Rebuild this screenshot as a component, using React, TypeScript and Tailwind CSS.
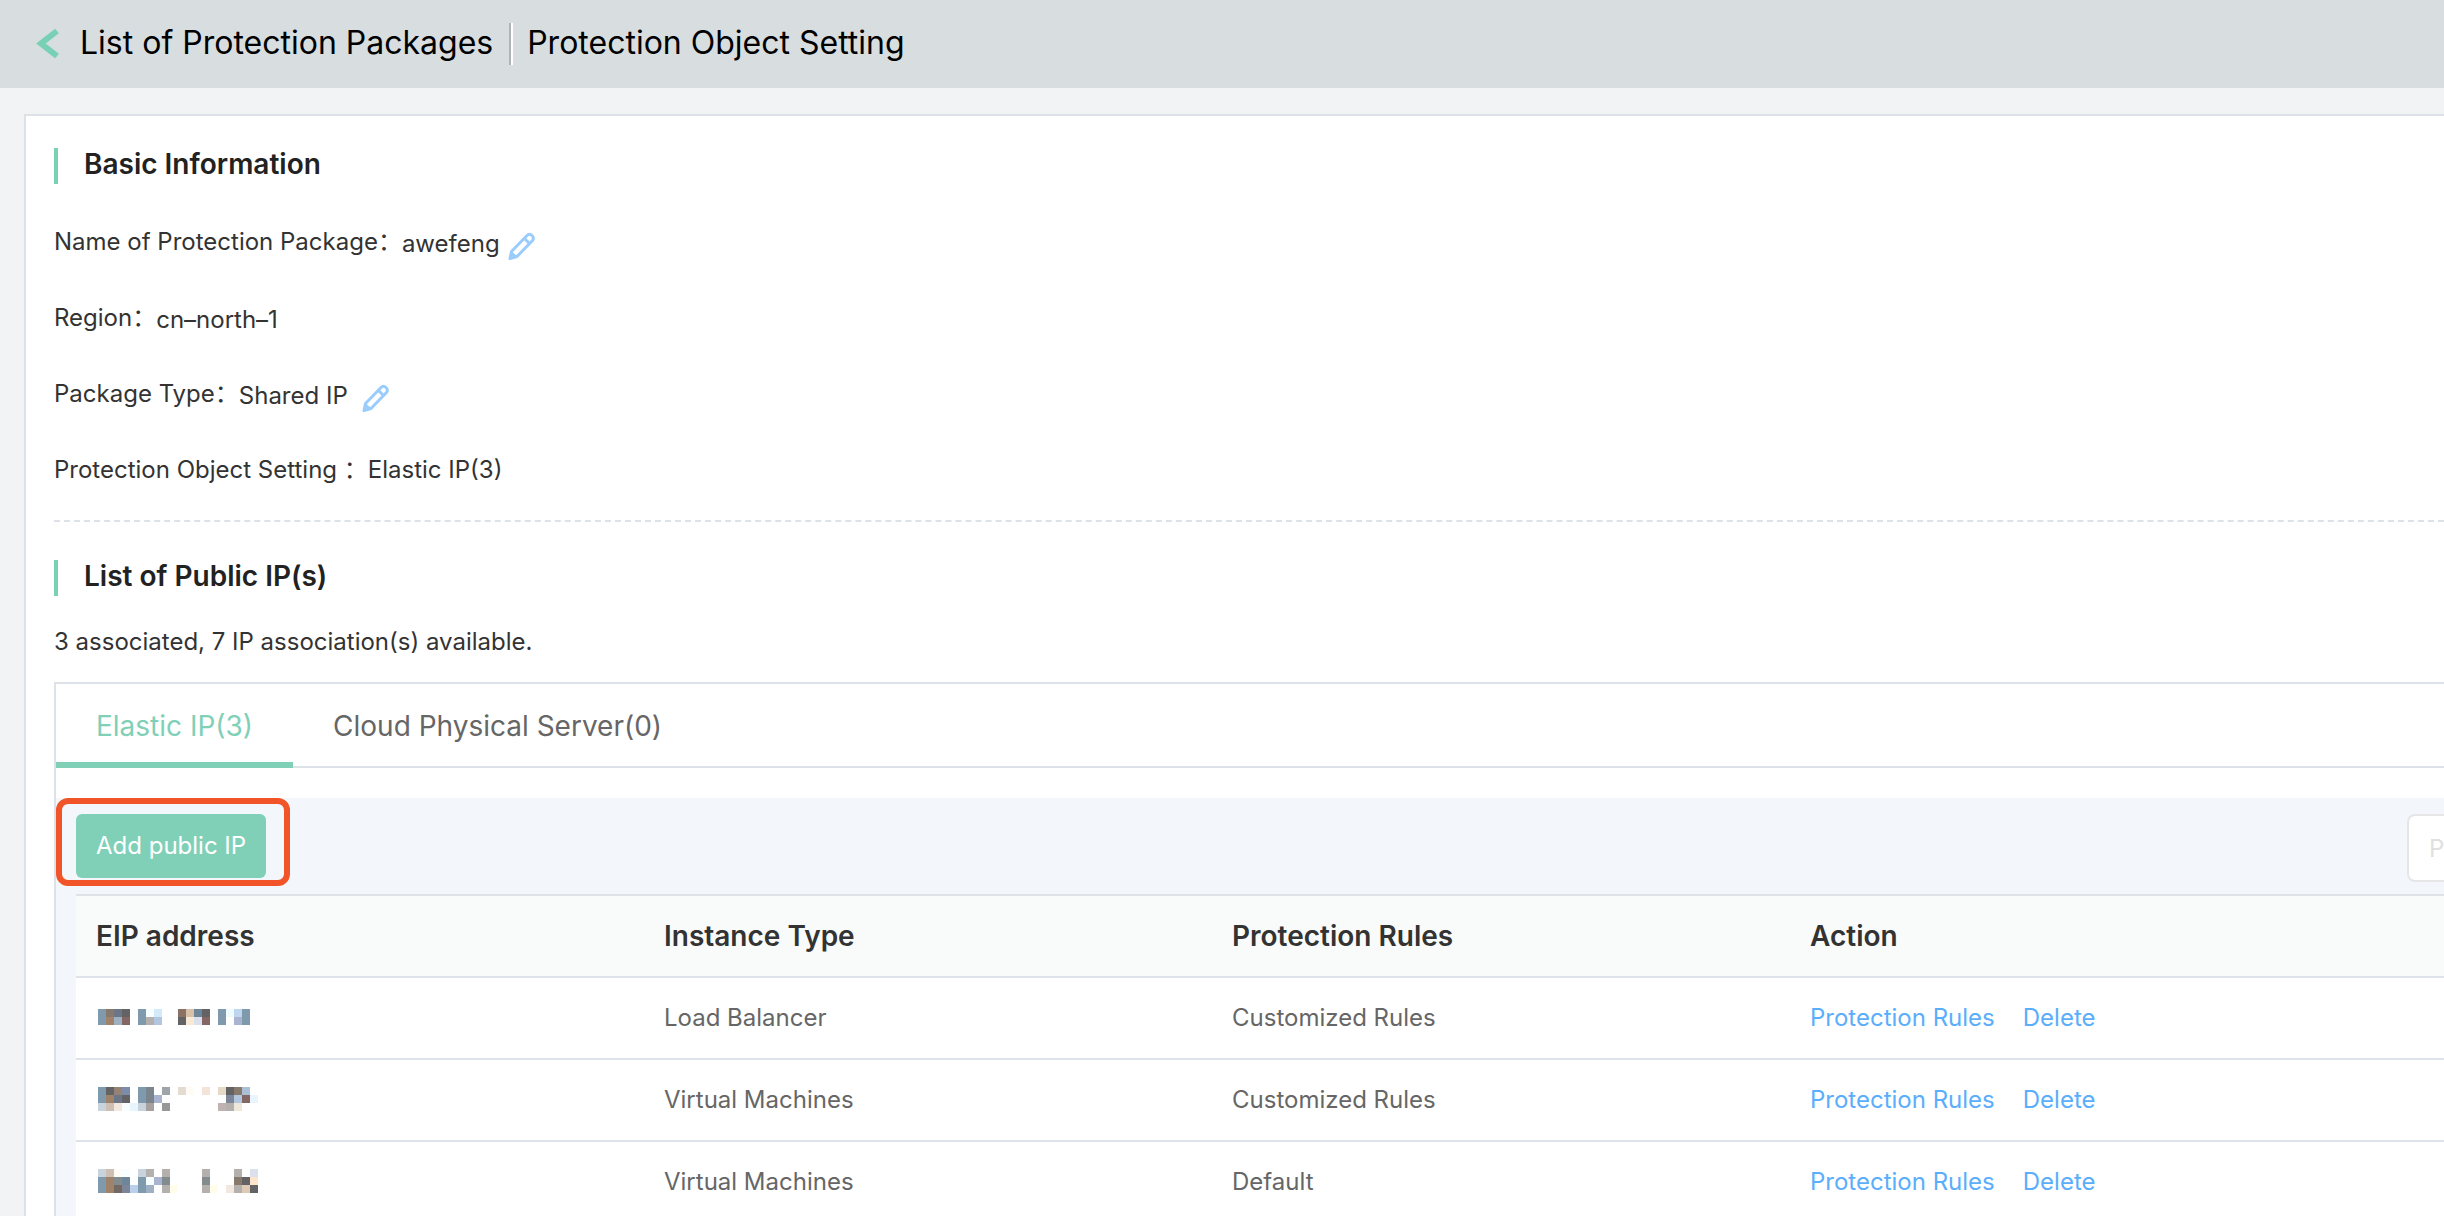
import React from "react";

const P: Record<string, string> = {
  a: "#7f9aad", b: "#877a6c", c: "#6c7686", d: "#636366", e: "#f6feff", f: "#d5eaf9",
  g: "#8b7265", h: "#d8c0a9", i: "#6e8699", j: "#f0fbff", k: "#bfd7ee", l: "#a0826a",
  m: "#9fb0c2", n: "#846765", o: "#b3b0ae", p: "#b3c6e0", q: "#f8ead5", r: "#dae1ec",
  s: "#aab4d0", t: "#968275", u: "#7d8ca8", v: "#7a858d", w: "#9ea5a9", x: "#e4dcd1",
  y: "#fffcf6", z: "#f2e4d8", A: "#e6d9c8", B: "#a9c0d6", C: "#7d8599", D: "#e8f5ff",
  E: "#c9d3dc", F: "#cdbfb4", G: "#f3e8e0", H: "#a6a19e", I: "#989898", J: "#c0b2b0",
  K: "#efe7da", L: "#828b8e", M: "#fffcea", N: "#fde5cb", O: "#b9cfec", Q: "#736862",
  R: "#dfcab6",
};

const MASKED = [
  ["abcd.aef..ghid.ajka", "almn.aop..dqrn.a.sa"],
  ["adtu.av.w.xy.z.AdbB", "alcd.avs........CpnD", "EFGeDEH.I......JoK"],
  ["EFye.Eo.o....o...o.r", "alLi.aesL....L...bdN", "alQCOam.oM...oM.GoRd"],
];

function MaskedAddress({ rows }: { rows: string[] }) {
  return (
    <svg role="img" aria-label="Masked address" width="160" height={rows.length * 8} className="ml-0.5 block" shapeRendering="crispEdges">
      {rows.flatMap((row, y) =>
        [...row].map((c, x) => (c === "." ? null : <rect key={x + "-" + y} x={x * 8} y={y * 8} width="8" height="8" fill={P[c]} />)),
      )}
    </svg>
  );
}

function EditButton({ label }: { label: string }) {
  return (
    <button type="button" aria-label={label} className="mt-1.5 block">
      <svg width="28" height="28" viewBox="0 0 28 28" fill="none" stroke="#9accfd" strokeWidth="3" strokeLinejoin="round">
        <path d="M2 26.500 3.500 19.500 19 3.500Q21.500 1 24 3.500 26.500 6 24.500 8.500L9 24.500Z" />
        <path d="m16.500 6.500 5 5M3 21l5 4" />
      </svg>
    </button>
  );
}

function Info({ label, value, edit, gap = "" }: { label: string; value: string; edit?: string; gap?: string }) {
  return (
    <div className="flex h-[76px] items-start leading-9">
      <dt>{label}：</dt>
      <dd className={`flex items-start ${gap}`}>
        {value}
        {edit && <EditButton label={edit} />}
      </dd>
    </div>
  );
}

function SectionTitle({ children }: { children: React.ReactNode }) {
  return (
    <h2 className="h-9 border-l-4 border-[#78d0b5] pl-[26px] text-[28px] leading-8 font-semibold text-[#222]">{children}</h2>
  );
}

const ROWS = [
  { type: "Load Balancer", rules: "Customized Rules" },
  { type: "Virtual Machines", rules: "Customized Rules" },
  { type: "Virtual Machines", rules: "Default" },
];

export default function App() {
  return (
    <div className="h-screen overflow-hidden bg-[#f2f3f5] font-['Inter','Noto_Sans_CJK_SC',sans-serif] text-2xl text-[#333]">
      <header className="flex h-22 items-center bg-[#d8dde0] pl-9 text-[32px] leading-10 text-black">
        <a href="#packages" className="flex items-center gap-5 pb-0.5">
          <svg width="24" height="30" viewBox="0 0 24 30" fill="none" stroke="#78d0b5" strokeWidth="6">
            <path d="M21 3 5 15.500l16 12.500" />
          </svg>
          List of Protection Packages
        </a>
        <span className="mr-3.5 ml-4 h-[42px] w-1 border-r-2 border-l-2 border-r-white border-l-[#b0b4b7]" />
        <h1 className="pb-0.5">Protection Object Setting</h1>
      </header>

      <main className="mt-[26px] ml-6 border-t-2 border-l-2 border-[#dce2e7] bg-white pt-8 pl-7">
        <SectionTitle>Basic Information</SectionTitle>
        <dl className="mt-10">
          <Info label="Name of Protection Package" value="awefeng" edit="Edit package name" gap="gap-2 pt-0.5" />
          <Info label="Region" value="cn–north–1" gap="pt-0.5" />
          <Info label="Package Type" value="Shared IP" edit="Edit package type" gap="gap-3.5 pt-0.5" />
          <Info label="Protection Object Setting " value="Elastic IP(3)" />
        </dl>
        <hr className="-mt-2 border-t-2 border-dashed border-[#dce2e7]" />
        <div className="mt-[38px]">
          <SectionTitle>List of Public IP(s)</SectionTitle>
        </div>
        <p className="mt-7 leading-9">3 associated, 7 IP association(s) available.</p>

        <section className="mt-[22px] border-t-2 border-l-2 border-[#dce2e7]">
          <div role="tablist" className="flex h-21 border-b-2 border-[#dce2e7] text-[28px]">
            <button type="button" role="tab" aria-selected="true" className="-mb-0.5 border-b-6 border-[#7fd0b7] px-10 pt-2 text-[#7fd0b7]">
              Elastic IP(3)
            </button>
            <button type="button" role="tab" aria-selected="false" className="px-10 pt-1 text-[#666]">
              Cloud Physical Server(0)
            </button>
          </div>
          <div className="mt-[30px] bg-[#f3f7fc] pl-5">
            <div className="flex h-24 items-start justify-between pt-4">
              <div className="relative">
                <button type="button" className="h-16 rounded-md bg-[#80d0b8] px-5 text-white">
                  Add public IP
                </button>
                <div className="pointer-events-none absolute -top-4 -right-6 -bottom-2 -left-5 rounded-xl border-6 border-[#f15428]" />
              </div>
              <input
                type="text"
                aria-label="Search"
                placeholder="P"
                className="h-17 w-[37px] rounded-l-lg border-2 border-r-0 border-[#e6e6e6] bg-white pl-5 placeholder:text-[#e0e0e0]"
              />
            </div>
            <table className="w-full table-fixed border-collapse bg-white text-left">
              <thead>
                <tr className="h-[82px] border-y-2 border-[#dde3e8] bg-[#f9fbfa] text-[28px]">
                  <th className="w-[568px] px-5 pt-0.5 font-semibold">EIP address</th>
                  <th className="w-[568px] px-5 pt-0.5 font-semibold">Instance Type</th>
                  <th className="w-[578px] px-5 pt-0.5 font-semibold">Protection Rules</th>
                  <th className="px-5 pt-0.5 font-semibold">Action</th>
                </tr>
              </thead>
              <tbody className="text-[#666]">
                {ROWS.map((row, i) => (
                  <tr key={i} className="h-[82px] border-b-2 border-[#dde3e8]">
                    <td className="px-5 pb-0.5"><MaskedAddress rows={MASKED[i]} /></td>
                    <td className="px-5">{row.type}</td>
                    <td className="px-5">{row.rules}</td>
                    <td className="px-5 text-[#5aaefb]">
                      <div className="flex gap-7">
                        <a href="#rules">Protection Rules</a>
                        <a href="#delete">Delete</a>
                      </div>
                    </td>
                  </tr>
                ))}
              </tbody>
            </table>
          </div>
        </section>
      </main>
    </div>
  );
}
